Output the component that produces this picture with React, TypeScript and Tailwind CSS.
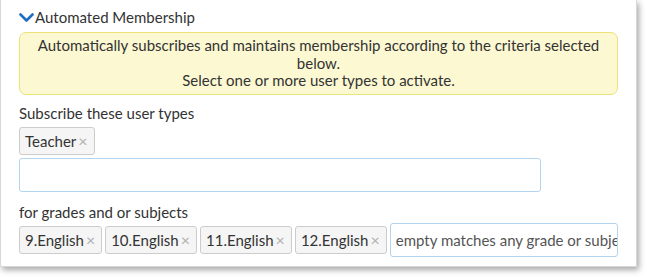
import React from 'react';

const Tag = ({ label }: { label: string }) => (
  <span className="inline-flex items-center h-[28px] pl-[5px] pr-[6px] bg-[#f5f5f5] border border-[#cccccc] rounded-[3px] text-[15px] text-[#333]">
    {label}
    <span className="ml-[2px] text-[#b0b0b0] text-[16px] leading-none">×</span>
  </span>
);

const App: React.FC = () => {
  return (
    <div className="w-[647px] h-[279px] bg-white" style={{ fontFamily: 'Lato, "Open Sans", sans-serif' }}>
      <div className="w-[637px] h-[267px] bg-white border border-[#d8d8d8] border-t-0 shadow-[2px_3px_6px_rgba(0,0,0,0.35)] pl-[18px] pr-[18px] pt-[6px]">
        <div className="flex items-center h-[22px] text-[15px] text-[#333]">
          <svg width="15" height="10" viewBox="0 0 15 10" className="mr-[1px] mt-[2px]">
            <path d="M1.5 1.5 L7.5 7.5 L13.5 1.5" fill="none" stroke="#1e6fc0" strokeWidth="2.6" strokeLinecap="round" strokeLinejoin="round" />
          </svg>
          <span>Automated Membership</span>
        </div>
        <div className="mt-[4px] w-[599px] h-[63px] bg-[#fcf8d2] border border-[#ece27a] rounded-[7px] flex items-center justify-center text-center text-[15px] leading-[17.5px] text-[#333]">
          <p>
            Automatically subscribes and maintains membership according to the criteria selected
            <br />
            below.
            <br />
            Select one or more user types to activate.
          </p>
        </div>
        <div className="mt-[9px] text-[15px] text-[#333] leading-[18px]">Subscribe these user types</div>
        <div className="mt-[5px]">
          <Tag label="Teacher" />
        </div>
        <div className="mt-[3px] w-[522px] h-[34px] border border-[#b3d4ef] rounded-[3px]" />
        <div className="mt-[11px] text-[15px] text-[#333] leading-[18px]">for grades and or subjects</div>
        <div className="mt-[2px] flex items-center gap-[3px]">
          <Tag label="9.English" />
          <Tag label="10.English" />
          <Tag label="11.English" />
          <Tag label="12.English" />
          <div className="w-[230px] h-[34px] border border-[#b3d4ef] rounded-[3px] flex items-center pl-[5px] overflow-hidden whitespace-nowrap text-[15px] text-[#555]">
            empty matches any grade or subject
          </div>
        </div>
      </div>
    </div>
  );
};

export default App;
